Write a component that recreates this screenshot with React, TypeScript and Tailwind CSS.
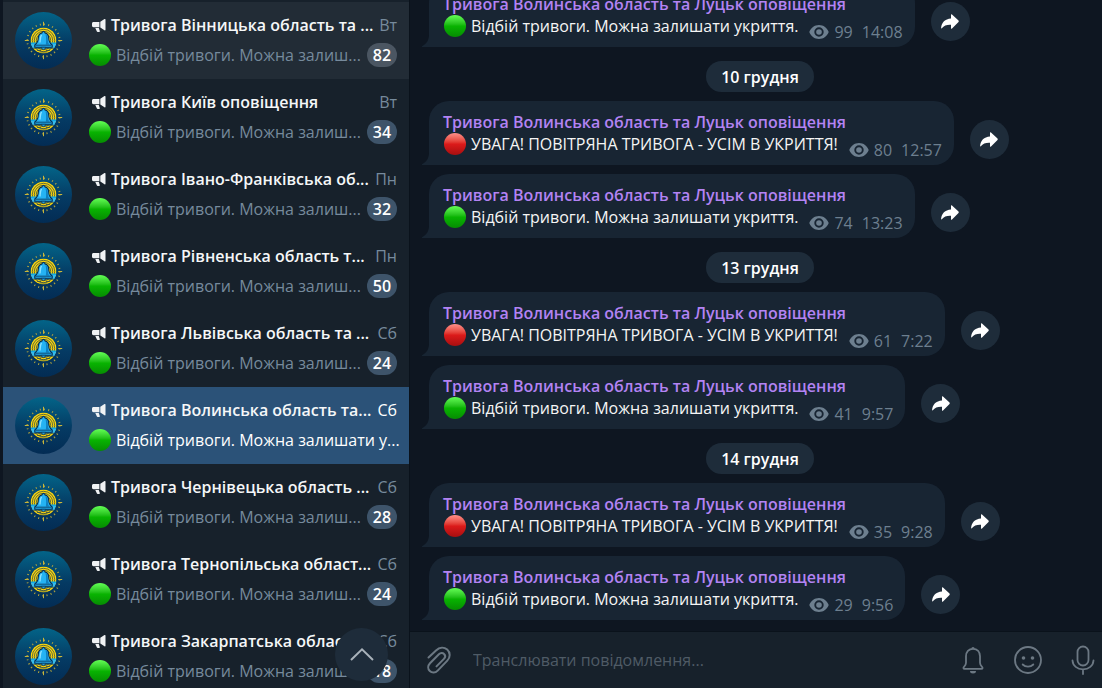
import { useState } from "react";

interface Chat {
  name: string;
  preview: string;
  day: string;
  unread?: number;
  muted?: boolean;
}

interface Message {
  alarm: boolean;
  views: number;
  time: string;
}

interface DayGroup {
  date: string;
  messages: Message[];
}

const SHORT = "Відбій тривоги. Можна залиш...";

const CHATS: Chat[] = [
  { name: "Тривога Вінницька область та ...", preview: SHORT, day: "Вт", unread: 82, muted: true },
  { name: "Тривога Київ оповіщення", preview: SHORT, day: "Вт", unread: 34 },
  { name: "Тривога Івано-Франківська об...", preview: SHORT, day: "Пн", unread: 32 },
  { name: "Тривога Рівненська область т...", preview: SHORT, day: "Пн", unread: 50 },
  { name: "Тривога Львівська область та ...", preview: SHORT, day: "Сб", unread: 24 },
  { name: "Тривога Волинська область та...", preview: "Відбій тривоги. Можна залишати у...", day: "Сб" },
  { name: "Тривога Чернівецька область ...", preview: SHORT, day: "Сб", unread: 28 },
  { name: "Тривога Тернопільська област...", preview: SHORT, day: "Сб", unread: 24 },
  { name: "Тривога Закарпатська облас...", preview: SHORT, day: "Сб", unread: 18 },
];

const SELECTED = 5;

const GROUPS: DayGroup[] = [
  { date: "", messages: [{ alarm: false, views: 99, time: "14:08" }] },
  {
    date: "10 грудня",
    messages: [
      { alarm: true, views: 80, time: "12:57" },
      { alarm: false, views: 74, time: "13:23" },
    ],
  },
  {
    date: "13 грудня",
    messages: [
      { alarm: true, views: 61, time: "7:22" },
      { alarm: false, views: 41, time: "9:57" },
    ],
  },
  {
    date: "14 грудня",
    messages: [
      { alarm: true, views: 35, time: "9:28" },
      { alarm: false, views: 29, time: "9:56" },
    ],
  },
];

function Dot({ alarm = false }: { alarm?: boolean }) {
  return (
    <span
      className={`block h-[22px] w-[22px] shrink-0 rounded-full bg-linear-to-b ${
        alarm
          ? "from-[#ff8f8a] via-[#dc1a1a] via-50% to-[#a80f10]"
          : "from-[#62ff54] via-[#08b401] via-50% to-[#068c02]"
      }`}
    />
  );
}

function Avatar() {
  return (
    <svg viewBox="0 0 57 57" className="h-[57px] w-[57px] shrink-0" aria-hidden="true">
      <defs>
        <linearGradient id="avatar-bg" x1="0" y1="0" x2="0" y2="1">
          <stop offset="0" stopColor="#036488" />
          <stop offset="0.55" stopColor="#053a63" />
          <stop offset="1" stopColor="#032c54" />
        </linearGradient>
        <clipPath id="avatar-disc">
          <circle cx="28.5" cy="28.5" r="13" />
        </clipPath>
      </defs>
      <circle cx="28.5" cy="28.5" r="28.5" fill="url(#avatar-bg)" />
      <circle
        cx="28.5"
        cy="28.5"
        r="16.2"
        fill="none"
        stroke="#b3a53d"
        strokeWidth="1.8"
        strokeDasharray="1 3.241"
      />
      <path d="M28.5 9.800v4M28.500 43.200v4M9.800 28.500h4M43.200 28.500h4" stroke="#c9b63a" strokeWidth="1" />
      <g clipPath="url(#avatar-disc)">
        <circle cx="28.5" cy="28.5" r="13" fill="#f8d40f" />
        <g fill="none" stroke="#23424c" strokeWidth="0.7">
          <circle cx="28.5" cy="28.5" r="11.2" />
          <circle cx="28.5" cy="28.5" r="9.2" />
          <circle cx="28.5" cy="28.5" r="7.200" />
        </g>
        <path d="M14 30.500h29V36H14z" fill="#10a9e6" />
        <path d="M15 33h5M37 33h5M17 35h4M36 35h4" stroke="#7ddcff" strokeWidth="0.7" />
        <path d="M14 36.300h29" stroke="#0b3e66" strokeWidth="0.7" />
        <path d="M22 38.500h4M31 38.500h4M25 40h7" stroke="#23424c" strokeWidth="0.7" />
      </g>
      <path
        d="M28.500 19.500c1 0 1.500.7 1.500 1.400 2.500.7 3.600 2.600 3.700 5.200.1 3.500.7 5.200 3.500 6.900v2.300H19.800V33c2.800-1.700 3.400-3.400 3.500-6.900.1-2.600 1.200-4.500 3.700-5.200 0-.7.500-1.400 1.500-1.400z"
        fill="#25b3f3"
        stroke="#062c4f"
        strokeWidth="1.1"
      />
      <path d="M30.500 22c1.800 1 2.300 2.800 2.300 5 0 2.400.3 4 1.500 5.500h-3.500c.6-3 .5-7-.3-10.500z" fill="#0e7fc0" />
      <path d="M26.500 22.800c-1.300 1.800-1.200 4.500-1.500 7.700" fill="none" stroke="#8fe2ff" strokeWidth="1.3" />
      <path d="M20.500 33.200h16" stroke="#062c4f" strokeWidth="0.8" />
      <path d="M26.300 35.300h4.400a2.200 2 0 0 1-4.400 0z" fill="#25b3f3" stroke="#062c4f" strokeWidth="0.7" />
    </svg>
  );
}

function MegaphoneIcon({ className }: { className: string }) {
  return (
    <svg viewBox="0 0 14 14" className={`h-[14px] w-[14px] shrink-0 ${className}`} aria-hidden="true">
      <path
        d="M0 5.700C0 4.700.6 4 1.600 4h5.800v5.200H1.600C.6 9.200 0 8.600 0 7.600zM8.300 3.800l4.200-2.700c.6-.3 1 0 1 .5v10.100c0 .6-.4.900-1 .5L8.300 9.400zM3.300 10h3.500l1 3.100c.2.500-.1.900-.6.900H5.700c-.4 0-.7-.2-.8-.5z"
        fill="currentColor"
      />
    </svg>
  );
}

function EyeIcon() {
  return (
    <svg viewBox="0 0 20 14" className="h-[14px] w-5 shrink-0" aria-hidden="true">
      <path
        d="M10 0C5.500 0 1.800 2.800 0.300 7c1.500 4.200 5.200 7 9.700 7s8.200-2.800 9.700-7C18.200 2.800 14.500 0 10 0zm0 2.300a4.700 4.700 0 1 1 0 9.400 4.700 4.700 0 0 1 0-9.400z"
        fill="currentColor"
        fillRule="evenodd"
      />
      <circle cx="10" cy="7" r="2.800" fill="currentColor" />
    </svg>
  );
}

function ForwardIcon() {
  return (
    <svg viewBox="0 0 18 16" className="h-4 w-[18px]" aria-hidden="true">
      <path
        d="M10 .8c0-.6.600-.8 1-.4l6.500 6.200c.4.400.4.900 0 1.300L11 14.600c-.4.400-1 .2-1-.4v-3.500C5.800 10.500 3 11.400.8 14.300c-.3.300-.7.200-.7-.3C.6 8.500 4 4.900 10 4.500z"
        fill="currentColor"
      />
    </svg>
  );
}

function ChatRow({
  chat,
  selected,
  onSelect,
}: {
  chat: Chat;
  selected: boolean;
  onSelect: () => void;
}) {
  const rowColor = selected ? "bg-[#2b5278]" : chat.muted ? "bg-[#222c36]" : "";
  const dimColor = selected ? "text-white" : "text-[#768a9c]";

  return (
    <button
      type="button"
      onClick={onSelect}
      className={`flex h-[77px] w-full shrink-0 items-center px-3 text-left ${rowColor}`}
    >
      <Avatar />
      <span className="ml-[17px] flex min-w-0 flex-1 flex-col gap-2 pb-[2px]">
        <span className="flex h-[22px] items-center pl-[3px]">
          <MegaphoneIcon className="text-[#f0f2f4]" />
          <span className="ml-[5px] min-w-0 flex-1 whitespace-nowrap font-semibold text-[#f5f7f8]">
            {chat.name}
          </span>
          <span className={dimColor}>{chat.day}</span>
        </span>
        <span className="flex h-[22px] items-center">
          <Dot />
          <span className={`ml-[5px] min-w-0 flex-1 whitespace-nowrap ${dimColor}`}>
            {chat.preview}
          </span>
          {chat.unread && (
            <span
              className={`flex h-6 w-[30px] items-center justify-center rounded-full font-semibold text-white ${
                chat.muted ? "bg-[#4b5662]" : "bg-[#3e546a]"
              }`}
            >
              {chat.unread}
            </span>
          )}
        </span>
      </span>
    </button>
  );
}

function MessageRow({ message }: { message: Message }) {
  return (
    <div className="flex items-end gap-4">
      <div className="relative rounded-[20px] rounded-bl-none bg-[#182533] py-[10px] pr-3 pl-[14px]">
        <svg
          viewBox="0 0 7 12"
          className="absolute bottom-0 -left-[7px] h-3 w-[7px] text-[#182533]"
          aria-hidden="true"
        >
          <path d="M7 0C7 5 4.500 9 0 11.300V12h7z" fill="currentColor" />
        </svg>
        <div className="leading-[22px] font-semibold text-[#b383f3]">
          Тривога Волинська область та Луцьк оповіщення
        </div>
        <div className="flex h-[22px] items-center pl-px">
          <Dot alarm={message.alarm} />
          <span className="ml-[5px] text-[#f5f5f5]">
            {message.alarm
              ? "УВАГА! ПОВІТРЯНА ТРИВОГА - УСІМ В УКРИТТЯ!"
              : "Відбій тривоги. Можна залишати укриття."}
          </span>
          <span className="mt-3 ml-[11px] flex items-center text-[#6d7f8f]">
            <EyeIcon />
            <span className="ml-[5px]">{message.views}</span>
            <span className="ml-[9px]">{message.time}</span>
          </span>
        </div>
      </div>
      <button
        type="button"
        aria-label="Переслати"
        className="mb-[6px] flex h-[39px] w-[39px] shrink-0 items-center justify-center rounded-full bg-[#1e2c3a] text-white"
      >
        <ForwardIcon />
      </button>
    </div>
  );
}

function Composer() {
  const [text, setText] = useState("");

  return (
    <form
      onSubmit={(e) => e.preventDefault()}
      className="flex h-[57px] shrink-0 items-center border-t border-[#0a121b] bg-[#17212b] pr-[7px] pl-4 text-[#6c7883]"
    >
      <button type="button" aria-label="Прикріпити файл">
        <svg viewBox="0 0 26 28" className="h-7 w-[26px]" fill="none" stroke="currentColor" strokeWidth="2" strokeLinecap="round" aria-hidden="true">
          <path d="M2.500 11.500 10 4.400c3.700-3.600 8.200-3.500 11.200-.8 3.300 3 3.300 7.800.1 11L11.700 24.600c-2.500 2.500-5.800 2.500-7.900.4-2.200-2.200-2.100-5.400.2-7.800l8.900-8.900c1.700-1.700 3.900-1.700 5.200-.3 1.400 1.400 1.300 3.400-.2 4.900l-7.400 7.500" />
        </svg>
      </button>
      <input
        type="text"
        aria-label="Повідомлення"
        placeholder="Транслювати повідомлення..."
        value={text}
        onChange={(e) => setText(e.target.value)}
        className="ml-[21px] min-w-0 flex-1 bg-transparent text-white outline-none placeholder:text-[#4f5b66]"
      />
      <div className="flex items-center gap-[29px]">
        <button type="button" aria-label="Сповіщення">
          <svg viewBox="0 0 24 28" className="h-7 w-6" fill="none" stroke="currentColor" strokeWidth="1.800" strokeLinejoin="round" aria-hidden="true">
            <path d="M12 2.800c-4.300 0-7 3.200-7 7.500v6.500c0 1.600-.8 2.900-2 4.100-.9.900-.7 2 .6 2h16.800c1.300 0 1.500-1.100.6-2-1.200-1.200-2-2.500-2-4.100v-6.500c0-4.300-2.700-7.500-7-7.500z" />
            <path d="M10.300 2.800a1.700 1.900 0 0 1 3.400 0zM9 25h6a3 2.500 0 0 1-6 0z" fill="currentColor" stroke="none" />
          </svg>
        </button>
        <button type="button" aria-label="Емодзі">
          <svg viewBox="0 0 28 28" className="h-7 w-7" fill="none" stroke="currentColor" strokeWidth="1.800" strokeLinecap="round" aria-hidden="true">
            <circle cx="14" cy="14" r="13" />
            <circle cx="9.500" cy="12" r="1.800" fill="currentColor" stroke="none" />
            <circle cx="18.500" cy="12" r="1.800" fill="currentColor" stroke="none" />
            <path d="M8.700 18.500c2.800 2.900 7.800 2.900 10.600 0" />
          </svg>
        </button>
        <button type="button" aria-label="Голосове повідомлення">
          <svg viewBox="0 0 24 30" className="h-[30px] w-6" fill="none" stroke="currentColor" strokeWidth="1.800" strokeLinecap="round" aria-hidden="true">
            <rect x="6.500" y="1.500" width="11" height="19" rx="5.500" />
            <path d="M1.500 15.500c.3 5.200 4.700 8.800 10.500 8.800s10.200-3.600 10.500-8.800M12 24.500v4.500" />
          </svg>
        </button>
      </div>
    </form>
  );
}

export default function App() {
  const [selected, setSelected] = useState(SELECTED);

  return (
    <div className="flex h-screen overflow-hidden bg-[#0e1621] font-['Open_Sans',sans-serif] text-base">
      <aside className="relative ml-[3px] flex w-[406px] shrink-0 flex-col overflow-hidden bg-[#17212b] pt-[2px]">
        {CHATS.map((chat, i) => (
          <ChatRow
            key={chat.name}
            chat={chat}
            selected={i === selected}
            onSelect={() => setSelected(i)}
          />
        ))}
        <button
          type="button"
          aria-label="Вгору"
          className="absolute right-[21px] bottom-[7px] flex h-[53px] w-[53px] items-center justify-center rounded-full bg-[#1e2c3a] text-[#a9b2ba]"
        >
          <svg viewBox="0 0 24 14" className="h-[14px] w-6" fill="none" stroke="currentColor" strokeWidth="2" aria-hidden="true">
            <path d="M1 12 12 1.400 23 12" />
          </svg>
        </button>
      </aside>

      <main className="flex min-w-0 flex-1 flex-col border-l border-[#0a121b]">
        <div className="flex min-h-0 flex-1 flex-col justify-end overflow-hidden pr-[11px] pb-[11px] pl-[19px]">
          {GROUPS.map((group) => (
            <section key={group.date} className="mt-[14px] flex shrink-0 flex-col gap-[9px]">
              {group.date && (
                <h2 className="flex h-[31px] items-center self-center rounded-full bg-[#1e2c3a] px-[15px] font-semibold text-white">
                  {group.date}
                </h2>
              )}
              {group.messages.map((message) => (
                <MessageRow key={message.time} message={message} />
              ))}
            </section>
          ))}
        </div>
        <Composer />
      </main>
    </div>
  );
}
